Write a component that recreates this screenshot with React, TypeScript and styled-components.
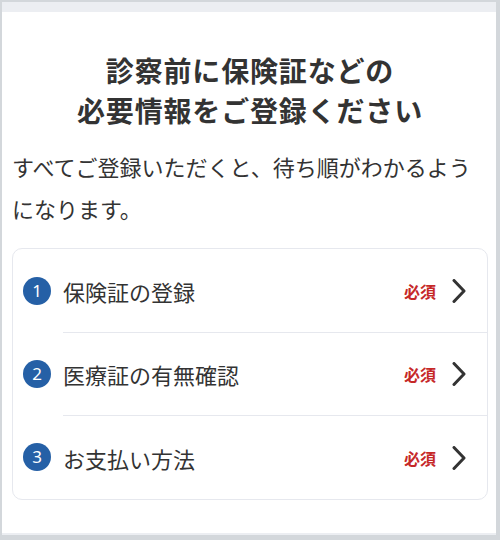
import styled, { createGlobalStyle } from "styled-components";

const GlobalStyle = createGlobalStyle`
  html, body {
    margin: 0;
    padding: 0;
    background: #d3d7db;
  }
  body {
    font-family: "Noto Sans CJK JP", "Noto Sans", sans-serif;
    color: #333333;
  }
`;

const Frame = styled.div`
  margin: 2px 4px 5px 2px;
  height: 533px;
  display: flex;
  flex-direction: column;
  background: #ffffff;
  overflow: hidden;
`;

const TopStrip = styled.div`
  height: 10px;
  background: #eceef2;
  flex: none;
`;

const BottomStrip = styled.div`
  height: 2px;
  background: #eceef2;
  flex: none;
`;

const Content = styled.main`
  flex: 1;
  padding: 38px 8px 0 10px;
`;

const Title = styled.h1`
  margin: 0;
  font-size: 28px;
  line-height: 40px;
  font-weight: 700;
  letter-spacing: 0.03em;
  text-align: center;
  color: #333333;
`;

const Lead = styled.p`
  margin: 15px 0 0;
  font-size: 22px;
  line-height: 42px;
  color: #333333;
`;

const Card = styled.ul`
  list-style: none;
  margin: 19px 0 0;
  padding: 0;
  border: 1px solid #e6e8ee;
  border-radius: 10px;
  background: #ffffff;
`;

const Row = styled.li`
  display: flex;
  align-items: stretch;
  height: 83px;
  padding-left: 10px;

  &:last-child {
    height: 84px;
  }
`;

const Badge = styled.span`
  flex: none;
  align-self: center;
  width: 28px;
  height: 28px;
  margin-right: 12px;
  border-radius: 50%;
  background: #2560a6;
  color: #ffffff;
  font-family: "Noto Sans", sans-serif;
  font-size: 17px;
  line-height: 28px;
  text-align: center;
`;

const RowBody = styled.div<{ $first?: boolean }>`
  flex: 1;
  display: flex;
  align-items: center;
  padding-right: 21px;
  border-top: ${(p) => (p.$first ? "none" : "1px solid #e6e8ee")};
`;

const Label = styled.span`
  flex: 1;
  font-size: 22px;
  color: #333333;
`;

const Required = styled.span`
  font-size: 16px;
  font-weight: 700;
  color: #c62828;
  margin-right: 16px;
`;

const Chevron = () => (
  <svg width="14" height="24" viewBox="0 0 14 24" fill="none">
    <path d="M2 1.5 L12 12 L2 22.5" stroke="#333333" strokeWidth="3" strokeLinecap="round" strokeLinejoin="round" />
  </svg>
);

const steps = ["保険証の登録", "医療証の有無確認", "お支払い方法"];

export default function App() {
  return (
    <>
      <GlobalStyle />
      <Frame>
        <TopStrip />
        <Content>
          <Title>
            診察前に保険証などの
            <br />
            必要情報をご登録ください
          </Title>
          <Lead>すべてご登録いただくと、待ち順がわかるようになります。</Lead>
          <Card>
            {steps.map((s, i) => (
              <Row key={s}>
                <Badge>{i + 1}</Badge>
                <RowBody $first={i === 0}>
                  <Label>{s}</Label>
                  <Required>必須</Required>
                  <Chevron />
                </RowBody>
              </Row>
            ))}
          </Card>
        </Content>
        <BottomStrip />
      </Frame>
    </>
  );
}
